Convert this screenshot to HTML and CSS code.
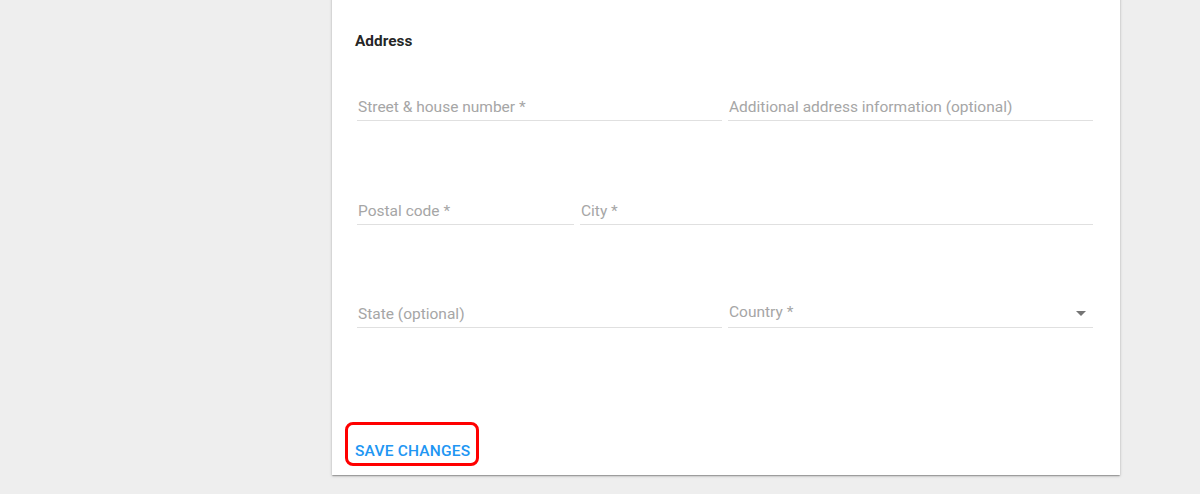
FILE: index.html
```html
<!DOCTYPE html>
<html lang="en">
<head>
<meta charset="utf-8">
<title>Address</title>
<link rel="stylesheet" href="styles.css">
</head>
<body>
<div class="page">
  <section class="card">
    <h2 class="heading">Address</h2>
    <div class="row row-first">
      <div class="field half"><span class="label">Street &amp; house number *</span></div>
      <div class="field half"><span class="label">Additional address information (optional)</span></div>
    </div>
    <div class="row">
      <div class="field postal"><span class="label">Postal code *</span></div>
      <div class="field grow"><span class="label">City *</span></div>
    </div>
    <div class="row row-last">
      <div class="field half"><span class="label">State (optional)</span></div>
      <div class="field half select"><span class="label">Country *</span><span class="arrow"></span></div>
    </div>
    <button class="save" type="button">SAVE CHANGES</button>
  </section>
</div>
</body>
</html>
```
FILE: styles.css
```css
html, body {
  margin: 0;
  padding: 0;
  background: #eeeeee;
  font-family: Roboto, "Liberation Sans", Arial, sans-serif;
  height: 494px;
  overflow: hidden;
}
.page {
  padding-left: 332px;
}
.card {
  width: 788px;
  box-sizing: border-box;
  background: #ffffff;
  margin-top: -4px;
  padding: 35px 27px 9px 13px;
  box-shadow: 0 1px 3px rgba(0,0,0,0.2), 0 1px 1px rgba(0,0,0,0.14), 0 2px 1px -1px rgba(0,0,0,0.12);
}
.heading {
  margin: 0 0 0 10px;
  font-size: 15.4px;
  line-height: 20px;
  font-weight: 700;
  color: rgba(0,0,0,0.87);
}
.row {
  display: flex;
  gap: 6px;
  margin-top: 80px;
  margin-left: 12px;
}
.row-first { margin-top: 46px; }
.row-last { margin-top: 79px; }
.field {
  position: relative;
  border-bottom: 1px solid #e0e0e0;
  padding-bottom: 3px;
  min-width: 0;
}
.half { flex: 1 1 0; }
.postal { flex: 0 0 217px; }
.grow { flex: 1 1 0; }
.label {
  display: block;
  font-size: 15.5px;
  line-height: 20px;
  color: #a6a6a6;
  padding-left: 1px;
  white-space: nowrap;
}
.select .label {
  margin-top: -2px;
  padding-bottom: 2px;
}
.arrow {
  position: absolute;
  right: 7px;
  top: 7px;
  width: 0;
  height: 0;
  border-left: 5px solid transparent;
  border-right: 5px solid transparent;
  border-top: 5px solid #757575;
}
.save {
  display: block;
  margin: 94px 0 0 0;
  padding: 16px 6px 2px 7px;
  border: 3px solid #ff0000;
  border-radius: 8px;
  background: #ffffff;
  font-family: Roboto, "Liberation Sans", Arial, sans-serif;
  font-size: 15.5px;
  line-height: 20px;
  font-weight: 500;
  letter-spacing: 0.2px;
  color: #2196f3;
  cursor: pointer;
}
```
